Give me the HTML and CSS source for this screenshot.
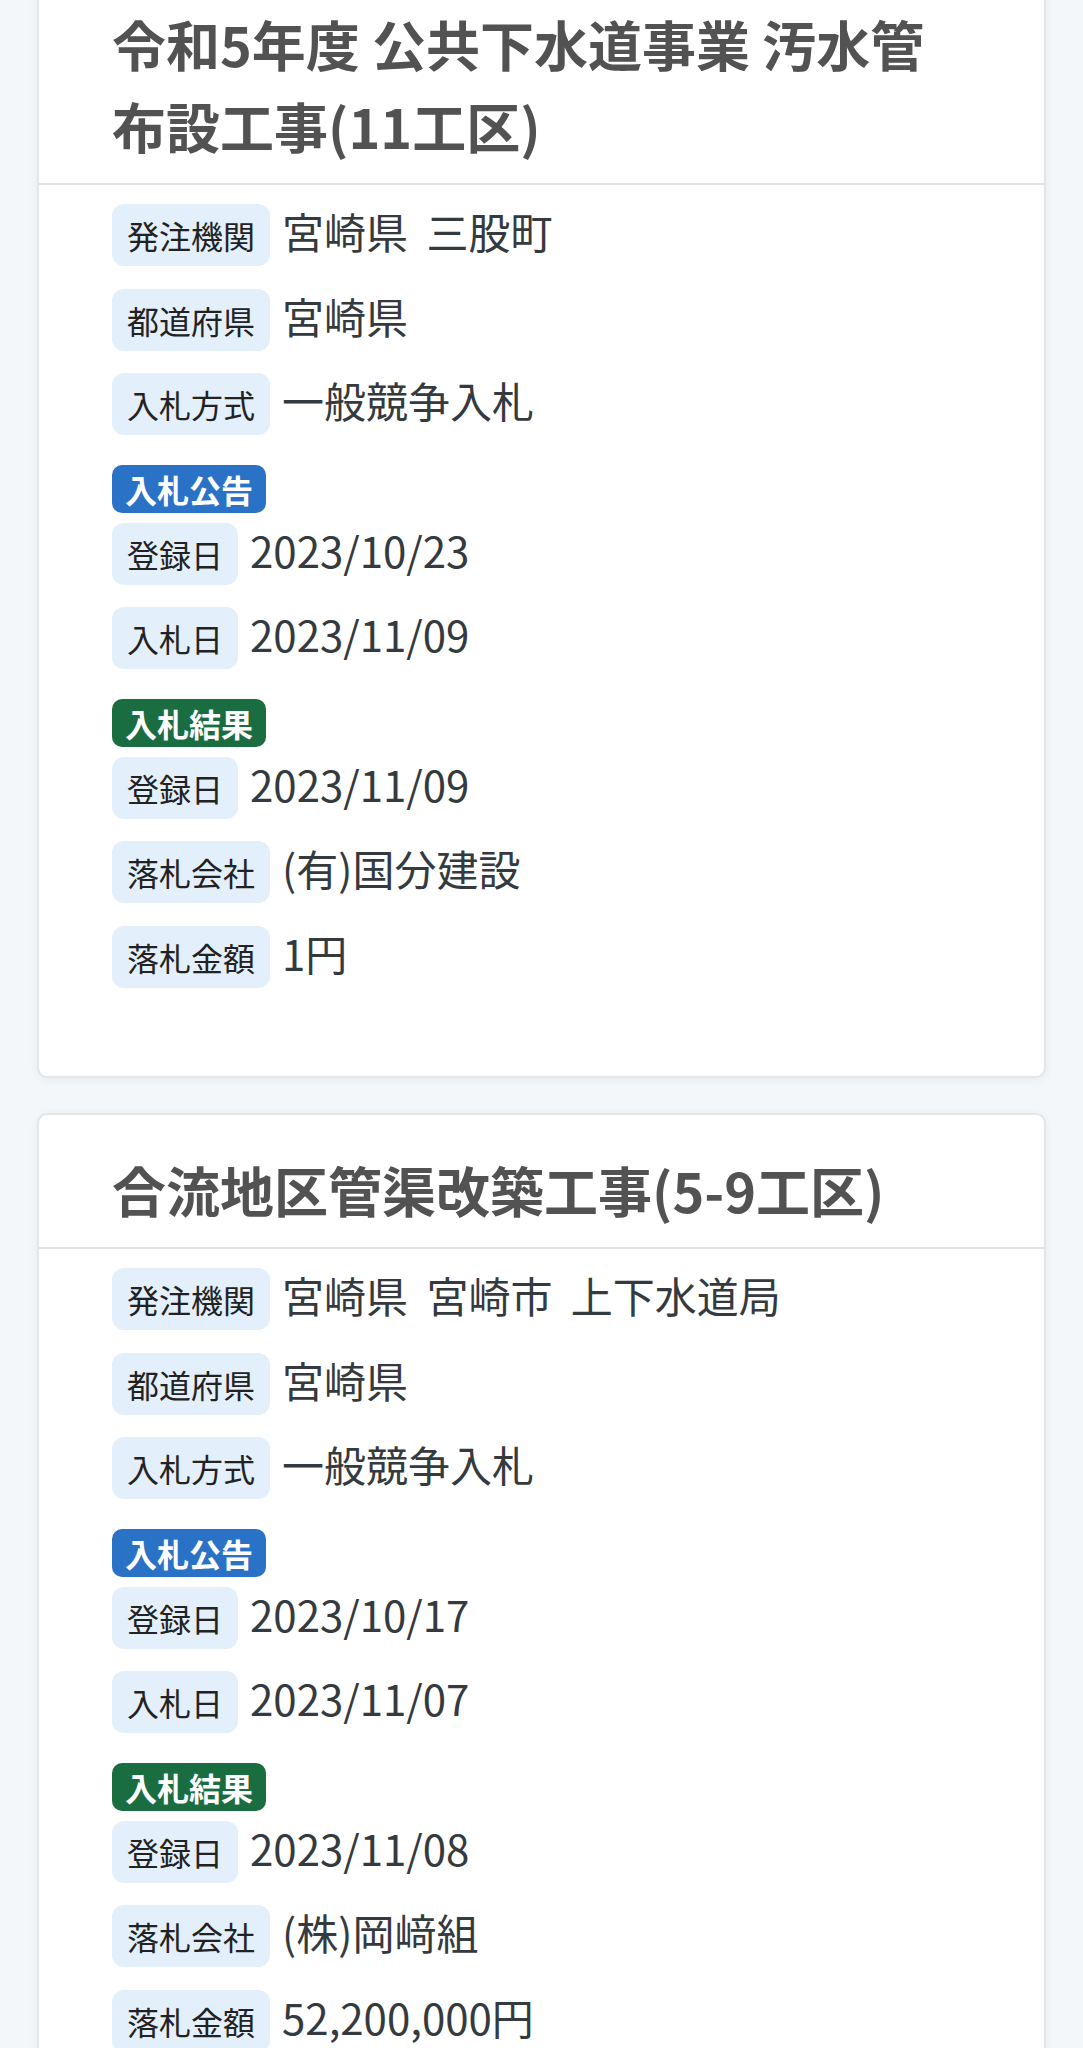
FILE: index.html
```html
<!DOCTYPE html>
<html lang="ja">
<head>
<meta charset="utf-8">
<title>入札情報</title>
<link rel="stylesheet" href="styles.css">
</head>
<body>
<div class="list">
  <article class="card">
    <header class="card-head">
      <h2 class="card-title">令和5年度 公共下水道事業 汚水管布設工事(11工区)</h2>
    </header>
    <div class="card-body">
      <div class="row"><span class="label">発注機関</span><span class="value">宮崎県 三股町</span></div>
      <div class="row"><span class="label">都道府県</span><span class="value">宮崎県</span></div>
      <div class="row"><span class="label">入札方式</span><span class="value">一般競争入札</span></div>
      <div class="section"><span class="badge badge-blue">入札公告</span></div>
      <div class="row"><span class="label">登録日</span><span class="value">2023/10/23</span></div>
      <div class="row"><span class="label">入札日</span><span class="value">2023/11/09</span></div>
      <div class="section"><span class="badge badge-green">入札結果</span></div>
      <div class="row"><span class="label">登録日</span><span class="value">2023/11/09</span></div>
      <div class="row"><span class="label">落札会社</span><span class="value">(有)国分建設</span></div>
      <div class="row"><span class="label">落札金額</span><span class="value">1円</span></div>
    </div>
  </article>
  <article class="card">
    <header class="card-head">
      <h2 class="card-title">合流地区管渠改築工事(5-9工区)</h2>
    </header>
    <div class="card-body">
      <div class="row"><span class="label">発注機関</span><span class="value">宮崎県 宮崎市 上下水道局</span></div>
      <div class="row"><span class="label">都道府県</span><span class="value">宮崎県</span></div>
      <div class="row"><span class="label">入札方式</span><span class="value">一般競争入札</span></div>
      <div class="section"><span class="badge badge-blue">入札公告</span></div>
      <div class="row"><span class="label">登録日</span><span class="value">2023/10/17</span></div>
      <div class="row"><span class="label">入札日</span><span class="value">2023/11/07</span></div>
      <div class="section"><span class="badge badge-green">入札結果</span></div>
      <div class="row"><span class="label">登録日</span><span class="value">2023/11/08</span></div>
      <div class="row"><span class="label">落札会社</span><span class="value">(株)岡﨑組</span></div>
      <div class="row"><span class="label">落札金額</span><span class="value">52,200,000円</span></div>
      <div class="row"><span class="label">落札会社</span><span class="value">(有)国分建設</span></div>
    </div>
  </article>
</div>
</body>
</html>
```
FILE: styles.css
```css
html, body {
  margin: 0;
  padding: 0;
}
body {
  background: #f4f7f9;
  font-family: "Noto Sans CJK JP", "Noto Sans", sans-serif;
  color: #343a40;
}
.list {
  display: flex;
  flex-direction: column;
  gap: 35px;
  padding: 0 37px 0 37px;
  margin-top: -33px;
}
.card {
  background: #fff;
  border: 2px solid #e3e6e9;
  border-radius: 10px;
  box-shadow: 0 2px 10px rgba(30, 50, 70, 0.06);
}
.card-head {
  padding: 34px 73px 16px 73px;
  border-bottom: 2px solid #e0e2e4;
}
.card-title {
  margin: 0;
  font-size: 54px;
  line-height: 82px;
  font-weight: 700;
  color: #525252;
}
.card-body {
  padding: 19px 73px 66px 73px;
}
.row {
  display: flex;
  align-items: baseline;
  gap: 12px;
  margin-bottom: 22.5px;
}
.label {
  flex: none;
  background: #e3effa;
  color: #222;
  font-size: 32px;
  line-height: 48px;
  padding: 7px 15px;
  border-radius: 12px;
}
.value {
  font-size: 42px;
  line-height: 50px;
  color: #353a3f;
  word-spacing: 9px;
}
.section {
  margin-top: 29.5px;
  margin-bottom: 10px;
  display: flex;
}
.badge {
  color: #fff;
  font-size: 32px;
  line-height: 44px;
  padding: 2px 13px;
  border-radius: 10px;
  font-weight: 700;
}
.badge-blue {
  background: #2a72c5;
}
.badge-green {
  background: #1a6d41;
}
```
